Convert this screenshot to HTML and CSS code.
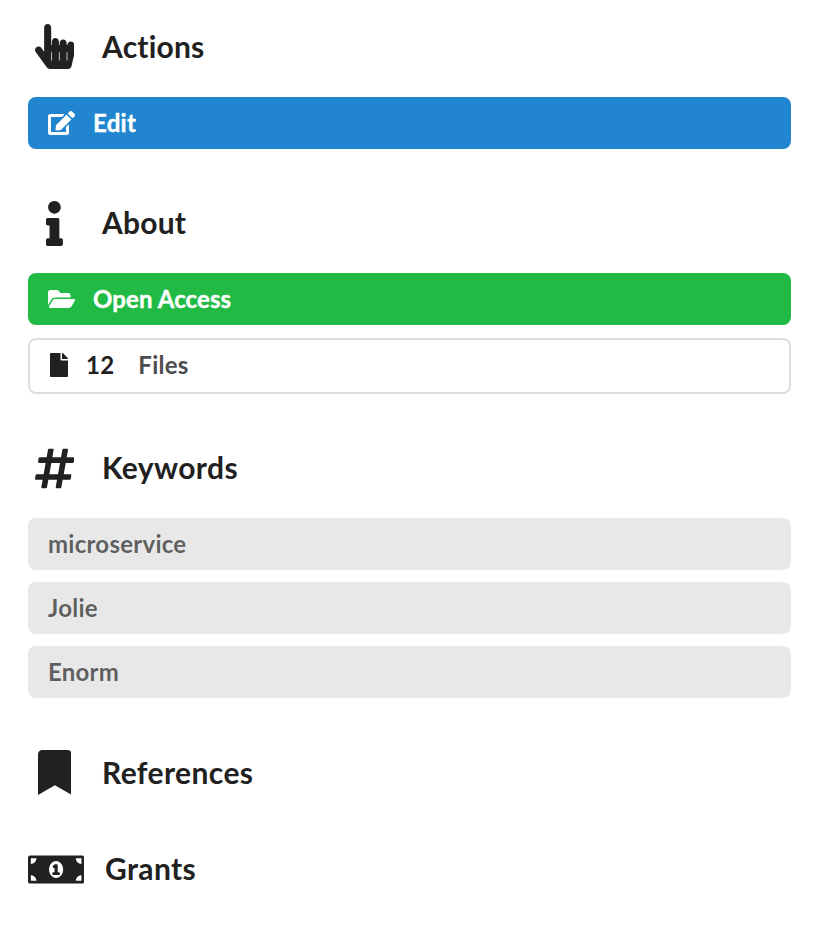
FILE: index.html
```html
<!DOCTYPE html>
<html lang="en">
<head>
<meta charset="utf-8">
<title>Record</title>
<link rel="stylesheet" href="styles.css">
</head>
<body>
<main class="sidebar">
  <section class="section">
    <h4 class="header"><span class="header-icon"><svg viewBox="0 0 448 512"><path d="M448 240v96c0 3.084-.356 6.159-1.063 9.162l-32 136C410.686 499.23 394.562 512 376 512H168a40.004 40.004 0 0 1-32.35-16.473l-127.997-176c-12.993-17.866-9.043-42.883 8.822-55.876 17.867-12.994 42.884-9.043 55.877 8.823L104 315.992V40c0-22.091 17.908-40 40-40s40 17.909 40 40v200h8v-40c0-22.091 17.908-40 40-40s40 17.909 40 40v40h8v-24c0-22.091 17.908-40 40-40s40 17.909 40 40v24h8c0-22.091 17.908-40 40-40s40 17.909 40 40zm-256 80h-8v96h8v-96zm88 0h-8v96h8v-96zm88 0h-8v96h8v-96z"/></svg></span><span class="title actions">Actions</span></h4>
    <div class="labels">
      <a class="label blue"><svg class="icon" viewBox="0 0 576 512"><path d="M402.6 83.2l90.2 90.2c3.8 3.8 3.8 10 0 13.8L274.4 405.6l-92.8 10.3c-12.4 1.4-22.9-9.1-21.5-21.5l10.3-92.8L388.8 83.2c3.8-3.8 10-3.8 13.8 0zm162-22.9l-48.8-48.8c-15.2-15.2-39.9-15.2-55.2 0l-35.4 35.4c-3.8 3.8-3.8 10 0 13.8l90.2 90.2c3.8 3.8 10 3.8 13.8 0l35.4-35.4c15.2-15.3 15.2-40 0-55.2zM384 346.2V448H64V128h229.8c3.2 0 6.2-1.3 8.5-3.5l40-40c7.6-7.6 2.2-20.5-8.5-20.5H48C21.5 64 0 85.5 0 112v352c0 26.5 21.5 48 48 48h352c26.5 0 48-21.5 48-48V306.2c0-10.7-12.9-16-20.5-8.5l-40 40c-2.2 2.3-3.5 5.3-3.5 8.5z"/></svg>Edit</a>
    </div>
  </section>
  <section class="section">
    <h4 class="header"><span class="header-icon low"><svg viewBox="0 0 192 512"><path d="M20 424.229h20V279.771H20c-11.046 0-20-8.954-20-20V212c0-11.046 8.954-20 20-20h112c11.046 0 20 8.954 20 20v212.229h20c11.046 0 20 8.954 20 20V492c0 11.046-8.954 20-20 20H20c-11.046 0-20-8.954-20-20v-47.771c0-11.046 8.954-20 20-20zM96 0C56.235 0 24 32.235 24 72s32.235 72 72 72 72-32.235 72-72S135.764 0 96 0z"/></svg></span><span class="title actions">About</span></h4>
    <div class="labels spaced">
      <a class="label green"><svg class="icon" viewBox="0 0 576 512"><path d="M572.694 292.093L500.27 416.248A63.997 63.997 0 0 1 444.989 448H45.025c-18.523 0-30.064-20.093-20.731-36.093l72.424-124.155A64 64 0 0 1 152 256h399.964c18.523 0 30.064 20.093 20.73 36.093zM152 224h328v-48c0-26.51-21.49-48-48-48H272l-64-64H48C21.49 64 0 85.49 0 112v278.046l69.077-118.418C86.214 242.25 117.989 224 152 224z"/></svg>Open Access</a>
      <a class="label basic"><svg class="icon file" viewBox="0 0 384 512"><path d="M224 136V0H24C10.7 0 0 10.7 0 24v464c0 13.3 10.7 24 24 24h336c13.3 0 24-10.7 24-24V160H248c-13.2 0-24-10.8-24-24zm160-14.1v6.1H256V0h6.1c6.4 0 12.5 2.5 17 7l97.9 98c4.5 4.5 7 10.6 7 16.9z"/></svg>12<span class="detail">Files</span></a>
    </div>
  </section>
  <section class="section keywords">
    <h4 class="header"><span class="header-icon low"><svg viewBox="0 0 448 512"><path d="M440.667 182.109l7.143-40c1.313-7.355-4.342-14.109-11.813-14.109h-74.81l14.623-81.891C377.123 38.754 371.468 32 363.997 32h-40.632a12 12 0 0 0-11.813 9.891L296.175 128H197.54l14.623-81.891C213.477 38.754 207.822 32 200.35 32h-40.632a12 12 0 0 0-11.813 9.891L132.528 128H53.432a12 12 0 0 0-11.813 9.891l-7.143 40C33.163 185.246 38.818 192 46.289 192h74.81L98.242 320H19.146a12 12 0 0 0-11.813 9.891l-7.143 40C-1.123 377.246 4.532 384 12.003 384h74.81L72.19 465.891C70.877 473.246 76.532 480 84.003 480h40.632a12 12 0 0 0 11.813-9.891L151.826 384h98.634l-14.623 81.891C234.523 473.246 240.178 480 247.65 480h40.632a12 12 0 0 0 11.813-9.891L315.472 384h79.096a12 12 0 0 0 11.813-9.891l7.143-40c1.313-7.355-4.342-14.109-11.813-14.109h-74.81l22.857-128h79.096a12 12 0 0 0 11.813-9.891zM261.889 320h-98.634l22.857-128h98.634l-22.857 128z"/></svg></span><span class="title">Keywords</span></h4>
    <div class="labels">
      <a class="label">microservice</a>
      <a class="label">Jolie</a>
      <a class="label">Enorm</a>
    </div>
  </section>
  <section class="section compact">
    <h4 class="header"><span class="header-icon"><svg viewBox="0 0 384 512"><path d="M0 512V48C0 21.49 21.49 0 48 0h288c26.51 0 48 21.49 48 48v464L192 400 0 512z"/></svg></span><span class="title">References</span></h4>
  </section>
  <section class="section">
    <h4 class="header"><span class="header-icon wide low"><svg viewBox="0 0 640 512"><path fill-rule="evenodd" d="M24 96h592c13 0 24 11 24 24v272c0 13-11 24-24 24H24c-13 0-24-11-24-24V120c0-13 11-24 24-24zM32 128v64c35 0 64-29 64-64zM608 128v64c-35 0-64-29-64-64zM32 384v-64c35 0 64 29 64 64zM608 384v-64c-35 0-64 29-64 64zM320 160c-44 0-80 43-80 96s36 96 80 96 80-43 80-96-36-96-80-96zM304 196h24c6 0 10 4 10 10v82h16c5 0 8 3 8 8v14c0 5-3 8-8 8h-68c-5 0-8-3-8-8v-14c0-5 3-8 8-8h16v-50h-12c-5 0-8-3-8-8v-10c0-4 2-7 5-9z"/></svg></span><span class="title">Grants</span></h4>
  </section>
</main>
</body>
</html>
```
FILE: styles.css
```css
* {
  box-sizing: border-box;
}

body {
  margin: 0;
  background: #fff;
  color: #212121;
  font-family: Lato, "Liberation Sans", sans-serif;
  font-variant-ligatures: none;
}

.sidebar {
  padding: 20px 28px 0;
}

.section {
  margin-bottom: 47px;
}

.section.keywords {
  margin-bottom: 48px;
}

.section.compact {
  margin-bottom: 43px;
}

.header {
  display: flex;
  align-items: center;
  height: 53px;
  margin: 0;
  font-size: 30px;
  font-weight: 700;
  line-height: 38px;
}

.title {
  padding-bottom: 2px;
  letter-spacing: .38px;
}

.title.actions {
  letter-spacing: .2px;
}

.header-icon {
  display: flex;
  justify-content: center;
  width: 53px;
  height: 45px;
  margin-right: 21px;
}

.header-icon.wide {
  width: 56px;
}

.header-icon.low {
  margin-top: 2px;
}

.header-icon svg {
  flex: none;
  height: 45px;
}

svg {
  display: block;
  fill: currentColor;
}

.labels {
  display: flex;
  flex-direction: column;
  gap: 12px;
  margin-top: 24px;
}

.labels.spaced {
  gap: 13px;
}

.label {
  display: flex;
  align-items: center;
  height: 52px;
  padding: 0 20px;
  border-radius: 8px;
  background: #e8e8e8;
  color: rgba(0, 0, 0, .6);
  font-size: 24px;
  font-weight: 700;
  line-height: 24px;
  letter-spacing: .25px;
}

.blue,
.green {
  color: #fff;
  letter-spacing: .1px;
  -webkit-text-stroke: .4px #fff;
}

.blue {
  background: #2185d0;
  letter-spacing: .3px;
}

.green {
  background: #21ba45;
}

.basic {
  height: 56px;
  padding-bottom: 2px;
  border: 2px solid #dededf;
  background: #fff;
  color: #212121;
}

.icon {
  height: 24px;
  margin-right: 18px;
}

.detail {
  margin-left: 24px;
  color: #4d4d4f;
}
```
